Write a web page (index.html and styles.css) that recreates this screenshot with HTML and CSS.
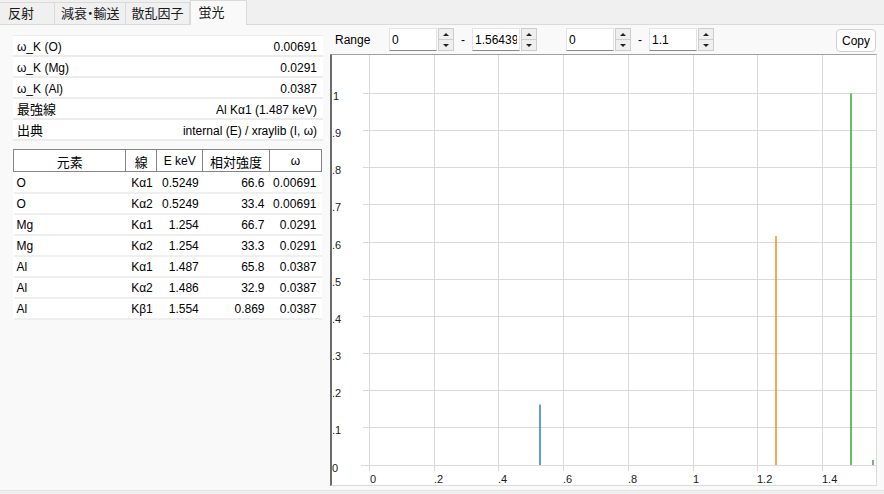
FILE: index.html
```html
<!DOCTYPE html>
<html lang="ja">
<head>
    <meta charset="UTF-8">
    <title>蛍光</title>
    <link rel="stylesheet" href="styles.css">
</head>
<body>
    <div class="tabs">
        <div class="tab first">反射</div>
        <div class="tab">減衰・輸送</div>
        <div class="tab">散乱因子</div>
        <div class="tab active">蛍光</div>
    </div>

    <div class="panel">
        <div class="left">
            <div class="props">
                <div class="prop"><span>ω_K (O)</span><span>0.00691</span></div>
                <div class="prop"><span>ω_K (Mg)</span><span>0.0291</span></div>
                <div class="prop"><span>ω_K (Al)</span><span>0.0387</span></div>
                <div class="prop"><span class="jp">最強線</span><span>Al Kα1 (1.487 keV)</span></div>
                <div class="prop"><span class="jp">出典</span><span>internal (E) / xraylib (I, ω)</span></div>
            </div>

            <table class="lines">
                <thead>
                    <tr>
                        <th class="c-el jp">元素</th>
                        <th class="c-line jp">線</th>
                        <th class="c-e">E keV</th>
                        <th class="c-rel jp">相対強度</th>
                        <th class="c-w">ω</th>
                    </tr>
                </thead>
                <tbody>
                    <tr><td>O</td><td>Kα1</td><td>0.5249</td><td>66.6</td><td>0.00691</td></tr>
                    <tr><td>O</td><td>Kα2</td><td>0.5249</td><td>33.4</td><td>0.00691</td></tr>
                    <tr><td>Mg</td><td>Kα1</td><td>1.254</td><td>66.7</td><td>0.0291</td></tr>
                    <tr><td>Mg</td><td>Kα2</td><td>1.254</td><td>33.3</td><td>0.0291</td></tr>
                    <tr><td>Al</td><td>Kα1</td><td>1.487</td><td>65.8</td><td>0.0387</td></tr>
                    <tr><td>Al</td><td>Kα2</td><td>1.486</td><td>32.9</td><td>0.0387</td></tr>
                    <tr><td>Al</td><td>Kβ1</td><td>1.554</td><td>0.869</td><td>0.0387</td></tr>
                </tbody>
            </table>
        </div>

        <div class="right">
            <div class="toolbar">
                <span class="range-label">Range</span>
                <div class="spin">
                    <input type="text" value="0">
                    <div class="spin-btns"><span class="up"></span><span class="down"></span></div>
                </div>
                <span class="dash">-</span>
                <div class="spin">
                    <input type="text" value="1.56439">
                    <div class="spin-btns"><span class="up"></span><span class="down"></span></div>
                </div>
                <div class="spin second">
                    <input type="text" value="0">
                    <div class="spin-btns"><span class="up"></span><span class="down"></span></div>
                </div>
                <span class="dash">-</span>
                <div class="spin">
                    <input type="text" value="1.1">
                    <div class="spin-btns"><span class="up"></span><span class="down"></span></div>
                </div>
                <button class="copy">Copy</button>
            </div>

            <div class="chart">
                <svg width="544" height="430" viewBox="0 0 544 430">
                    <!-- vertical grid + ticks -->
                    <g class="grid">
                        <line x1="37.5" y1="0" x2="37.5" y2="416"/>
                        <line x1="102.5" y1="0" x2="102.5" y2="416"/>
                        <line x1="166.5" y1="0" x2="166.5" y2="416"/>
                        <line x1="231.5" y1="0" x2="231.5" y2="416"/>
                        <line x1="296.5" y1="0" x2="296.5" y2="416"/>
                        <line x1="361.5" y1="0" x2="361.5" y2="416"/>
                        <line x1="425.5" y1="0" x2="425.5" y2="416"/>
                        <line x1="490.5" y1="0" x2="490.5" y2="416"/>
                    </g>
                    <!-- horizontal grid + ticks -->
                    <g class="grid">
                        <line x1="31" y1="38.5" x2="544" y2="38.5"/>
                        <line x1="31" y1="75.5" x2="544" y2="75.5"/>
                        <line x1="31" y1="112.5" x2="544" y2="112.5"/>
                        <line x1="31" y1="149.5" x2="544" y2="149.5"/>
                        <line x1="31" y1="187.5" x2="544" y2="187.5"/>
                        <line x1="31" y1="224.5" x2="544" y2="224.5"/>
                        <line x1="31" y1="261.5" x2="544" y2="261.5"/>
                        <line x1="31" y1="298.5" x2="544" y2="298.5"/>
                        <line x1="31" y1="335.5" x2="544" y2="335.5"/>
                        <line x1="31" y1="372.5" x2="544" y2="372.5"/>
                        <line x1="29" y1="410.5" x2="544" y2="410.5"/>
                    </g>

                    <g class="ylabels">
                        <text x="1" y="44.5">1</text>
                        <text x="0" y="81.5">.9</text>
                        <text x="0" y="118.5">.8</text>
                        <text x="0" y="155.5">.7</text>
                        <text x="0" y="193.5">.6</text>
                        <text x="0" y="230.5">.5</text>
                        <text x="0" y="267.5">.4</text>
                        <text x="0" y="304.5">.3</text>
                        <text x="0" y="341.5">.2</text>
                        <text x="0" y="378.5">.1</text>
                        <text x="0" y="416.5">0</text>
                    </g>
                    <g class="xlabels">
                        <text x="38" y="428">0</text>
                        <text x="102" y="428">.2</text>
                        <text x="166" y="428">.4</text>
                        <text x="231" y="428">.6</text>
                        <text x="296" y="428">.8</text>
                        <text x="361" y="428">1</text>
                        <text x="425" y="428">1.2</text>
                        <text x="490" y="428">1.4</text>
                    </g>

                    <!-- emission lines: O blue, Mg orange, Al green -->
                    <line x1="208" y1="410" x2="208" y2="349.5" stroke="#1f77b4" stroke-width="1.4"/>
                    <line x1="444" y1="410" x2="444" y2="181" stroke="#ff7f0e" stroke-width="1.4"/>
                    <line x1="519" y1="410" x2="519" y2="38.5" stroke="#2ca02c" stroke-width="1.4"/>
                    <line x1="541" y1="410" x2="541" y2="405" stroke="#2ca02c" stroke-width="1.4"/>
                </svg>
            </div>
        </div>
    </div>
</body>
</html>
```

FILE: styles.css
```css
* {
    box-sizing: border-box;
}
body {
    margin: 0;
    width: 884px;
    height: 494px;
    overflow: hidden;
    display: flex;
    flex-direction: column;
    background-color: #f0f0f0;
    font-family: "Liberation Sans", "Noto Sans CJK JP", sans-serif;
    font-size: 12px;
    color: #000;
}
.jp {
    font-size: 13px;
}

/* tabs */
.tabs {
    display: flex;
    align-items: flex-end;
    height: 24px;
}
.tab {
    height: 22px;
    min-width: 55px;
    padding: 0 5px 0 6px;
    border: 1px solid #dadada;
    border-left: none;
    border-bottom: none;
    background-color: #f0f0f0;
    font-size: 13px;
    font-feature-settings: "palt";
    line-height: 21px;
    color: #1a1a1a;
}
.tab.first {
    padding-left: 8px;
}
.tab.active {
    position: relative;
    z-index: 1;
    width: 57px;
    height: 25px;
    margin-bottom: -1px;
    padding-left: 8px;
    border-left: 1px solid #dadada;
    background-color: #f9f9f9;
    line-height: 23px;
}

/* panel */
.panel {
    flex: 1;
    display: flex;
    margin-bottom: 3px;
    background-color: #f9f9f9;
    border-top: 1px solid #dadada;
    border-bottom: 1px solid #e4e4e4;
}
.left {
    width: 330px;
    padding: 10px 7px 0 13px;
}

.props {
    width: 310px;
    border-top: 1px solid #ececec;
}
.prop {
    display: flex;
    justify-content: space-between;
    align-items: center;
    height: 21px;
    padding: 3px 6px 0 4px;
    background-color: #fff;
    border-bottom: 2px solid #ececec;
}
.prop .jp {
    line-height: 14px;
}

.lines {
    width: 309px;
    margin-top: 8px;
    border-collapse: collapse;
    background-color: #fff;
}
.lines th {
    height: 22px;
    padding: 1px 0 0;
    border: 1px solid #858585;
    font-weight: normal;
    text-align: center;
}
.lines th.c-e,
.lines th.c-w {
    font-size: 12px;
}
.c-el { width: 113px; }
.c-line { width: 31px; }
.c-e { width: 46px; }
.c-rel { width: 67px; }
.c-w { width: 52px; }
.lines td {
    height: 21px;
    padding: 2px 5px 0 0;
    border-bottom: 2px solid #efefef;
    text-align: right;
    white-space: nowrap;
}
.lines td:first-child {
    padding-left: 3px;
    text-align: left;
}
.lines td:nth-child(2),
.lines td:nth-child(3) {
    padding-right: 4px;
}

/* right side */
.right {
    flex: 1;
    display: flex;
    flex-direction: column;
    padding-right: 7px;
}
.toolbar {
    display: flex;
    align-items: center;
    height: 29px;
}
.range-label {
    width: 59px;
    padding-left: 5px;
}
.spin {
    display: flex;
    height: 23px;
}
.spin.second {
    margin-left: 29px;
}
.spin input {
    width: 48px;
    height: 23px;
    padding: 0 2px;
    border: 1px solid #e3e3e3;
    border-bottom-color: #8a8a8a;
    background-color: #fff;
    font: inherit;
    color: #000;
    outline: none;
}
.spin-btns {
    display: flex;
    flex-direction: column;
    width: 16px;
    margin-left: 1px;
}
.spin-btns span {
    flex: 1;
    display: flex;
    align-items: center;
    justify-content: center;
    border: 1px solid #cdcdcd;
    background-color: #efefef;
}
.spin-btns .down {
    border-top: none;
}
.spin-btns .up::before,
.spin-btns .down::before {
    content: "";
    border-left: 3px solid transparent;
    border-right: 3px solid transparent;
}
.spin-btns .up::before {
    border-bottom: 3px solid #222;
}
.spin-btns .down::before {
    border-top: 3px solid #222;
}
.dash {
    width: 18px;
    text-align: center;
}
.copy {
    width: 40px;
    height: 23px;
    margin-left: auto;
    margin-right: 1px;
    margin-top: 2px;
    padding: 0;
    border: 1px solid #d0d0d0;
    border-radius: 4px;
    background-color: #fdfdfd;
    font: inherit;
    color: #000;
}

.chart {
    height: 432px;
    background-color: #fff;
    border-left: 2px solid #6b6b6b;
    border-top: 1px solid #a0a0a0;
    border-right: 1px solid #dcdcdc;
    border-bottom: 1px solid #dcdcdc;
}
.chart svg {
    display: block;
}
.grid line {
    stroke: #d9d9d9;
    stroke-width: 1;
}
.ylabels text,
.xlabels text {
    font-family: "Liberation Sans", sans-serif;
    font-size: 11px;
    fill: #1a1a1a;
}
```
